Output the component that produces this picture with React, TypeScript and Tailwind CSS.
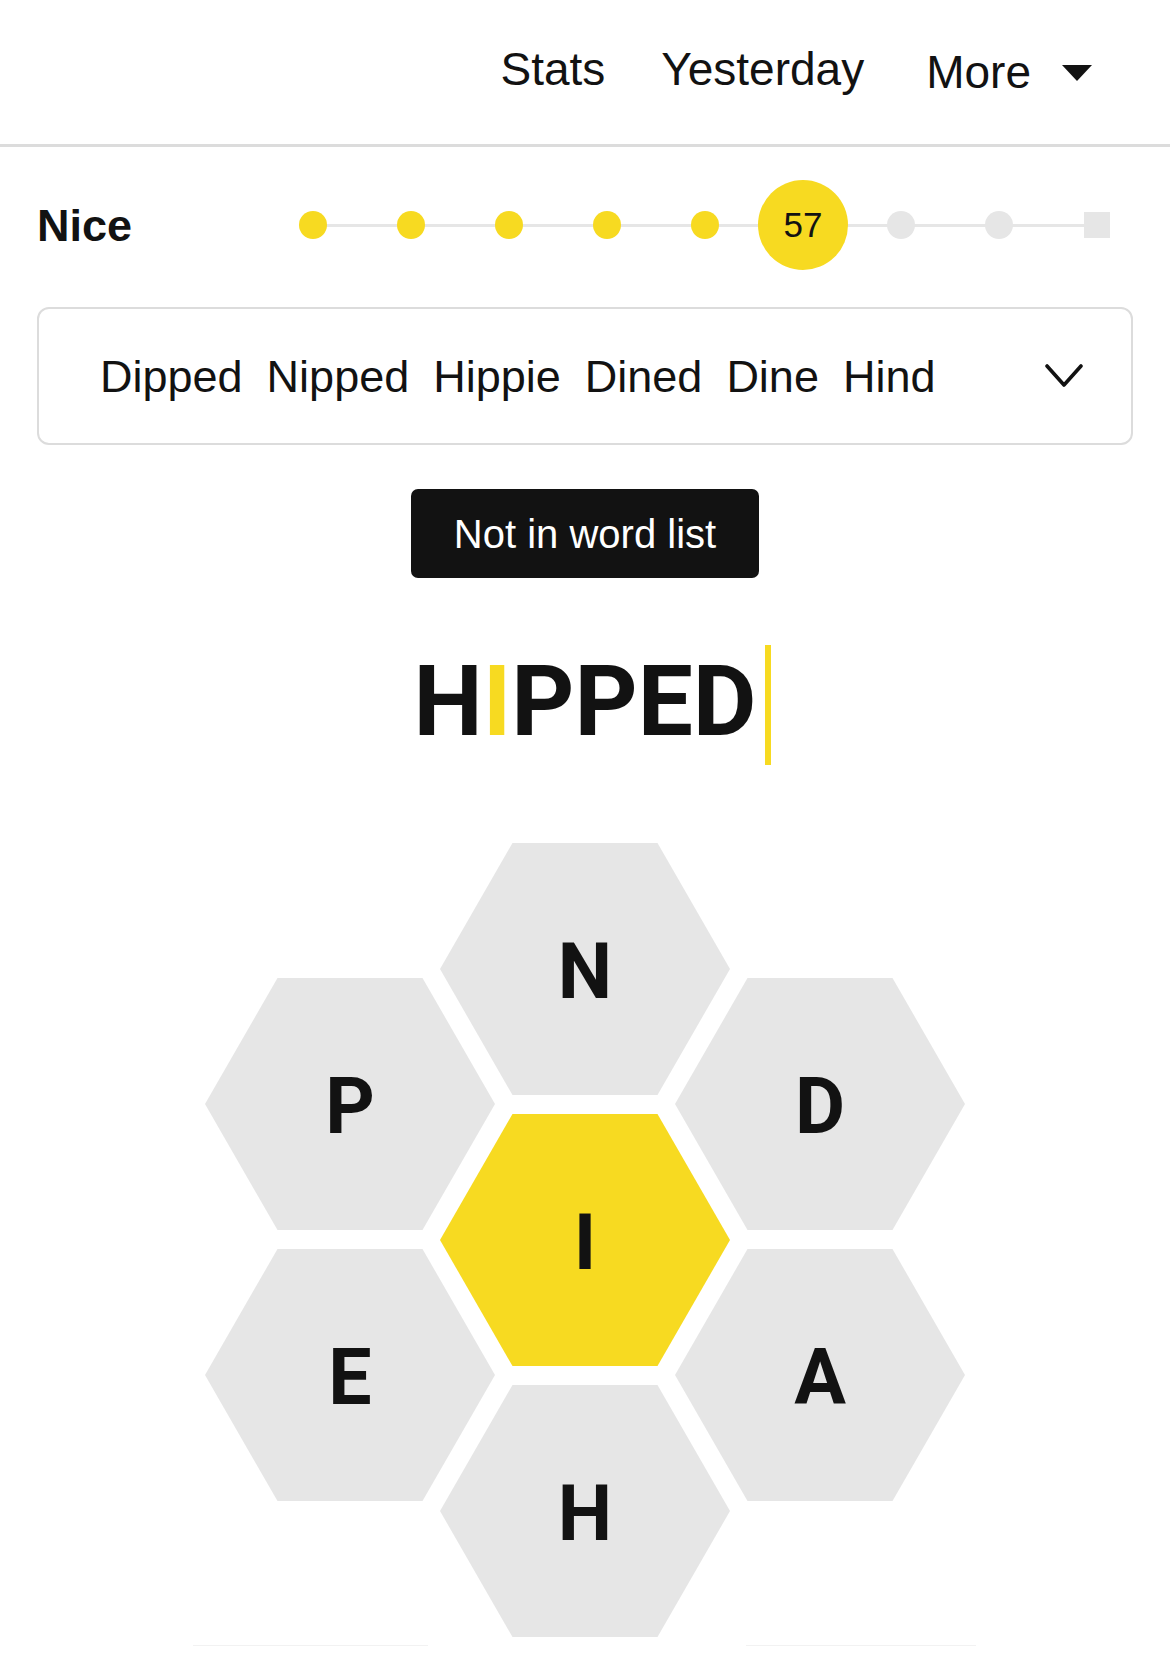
const hexClip = '[clip-path:polygon(25%_0,75%_0,100%_50%,75%_100%,25%_100%,0_50%)]';

// position of each cell inside the hive, in px from its top-left corner
const celdas = [
  { letra: 'N', pos: 'left-[235px] top-0', centro: false },
  { letra: 'P', pos: 'left-0 top-[135px]', centro: false },
  { letra: 'D', pos: 'left-[470px] top-[135px]', centro: false },
  { letra: 'I', pos: 'left-[235px] top-[271px]', centro: true },
  { letra: 'E', pos: 'left-0 top-[406px]', centro: false },
  { letra: 'A', pos: 'left-[470px] top-[406px]', centro: false },
  { letra: 'H', pos: 'left-[235px] top-[542px]', centro: false },
];

const palabras = ['Dipped', 'Nipped', 'Hippie', 'Dined', 'Dine', 'Hind'];

function Progreso() {
  const pasos = [1, 1, 1, 1, 1, 2, 0, 0, 3];
  return (
    <div className="relative ml-auto mr-[24px] grid grid-cols-[repeat(9,98px)] items-center h-[90px]">
      <div className="absolute left-[49px] right-[49px] top-[44px] h-[3px] bg-[#e6e6e6]" />
      {pasos.map((p, i) => (
        <div key={i} className="relative flex justify-center items-center">
          {p === 1 && <div className="w-[28px] h-[28px] rounded-full bg-[#f7da21]" />}
          {p === 0 && <div className="w-[28px] h-[28px] rounded-full bg-[#e6e6e6]" />}
          {p === 3 && <div className="w-[26px] h-[26px] bg-[#e6e6e6]" />}
          {p === 2 && (
            <div className="w-[90px] h-[90px] rounded-full bg-[#f7da21] flex items-center justify-center text-[35px] text-[#121212]">
              57
            </div>
          )}
        </div>
      ))}
    </div>
  );
}

export default function App() {
  return (
    <div className="w-[1170px] min-h-[1679px] bg-white text-[#121212] font-['Liberation_Sans',Arial,sans-serif] overflow-hidden">
      {/* Barra superior */}
      <div className="h-[147px] border-b-[3px] border-[#dcdcdc] flex items-center justify-end pr-[78px] pb-[6px] text-[46px] leading-none">
        <span>Stats</span>
        <span className="ml-[56px]">Yesterday</span>
        <span className="ml-[62px] mt-[6px]">More</span>
        <svg className="ml-[31px] mt-[8px]" width="30" height="16" viewBox="0 0 30 16">
          <polygon points="0,0 30,0 15,16" fill="#121212" />
        </svg>
      </div>

      {/* Rango y progreso */}
      <div className="mt-[33px] flex items-center pl-[37px]">
        <span className="text-[45px] font-bold leading-none">Nice</span>
        <Progreso />
      </div>

      {/* Palabras encontradas */}
      <div className="mt-[37px] mx-[37px] h-[138px] border-2 border-[#dcdcdc] rounded-[12px] flex items-center pl-[61px] pr-[48px]">
        <div className="flex gap-[24px] text-[45px] leading-none">
          {palabras.map(p => (
            <span key={p}>{p}</span>
          ))}
        </div>
        <svg className="ml-auto" width="38" height="26" viewBox="0 0 38 26">
          <polyline points="2,3 19,22 36,3" fill="none" stroke="#121212" strokeWidth="3.6" strokeLinecap="round" strokeLinejoin="round" />
        </svg>
      </div>

      {/* Mensaje */}
      <div className="mt-[44px] flex justify-center">
        <div className="h-[89px] w-[348px] rounded-[7px] bg-[#121212] text-white text-[40px] flex items-center justify-center">
          Not in word list
        </div>
      </div>

      {/* Palabra en curso */}
      <div className="mt-[67px] h-[120px] flex justify-center items-center pl-[14px]">
        <span className="font-['Roboto',sans-serif] font-bold text-[98px] leading-none mb-[6px]">
          H<span className="text-[#f7da21]">I</span>PPED
        </span>
        <div className="ml-[8px] w-[6px] h-[120px] bg-[#f7da21]" />
      </div>

      {/* Colmena */}
      <div className="relative mx-auto mt-[78px] w-[760px] h-[794px]">
        {celdas.map(c => (
          <div
            key={c.letra}
            className={`absolute ${c.pos} w-[290px] h-[252px] ${hexClip} flex items-center justify-center ${
              c.centro ? 'bg-[#f7da21]' : 'bg-[#e6e6e6]'
            }`}
          >
            <span className="font-['Roboto',sans-serif] font-bold text-[77px] leading-none mt-[6px]">{c.letra}</span>
          </div>
        ))}
      </div>

      <div className="mt-[8px] flex">
        <div className="ml-[193px] w-[235px] h-px bg-[#f2f2f2]" />
        <div className="ml-[318px] w-[230px] h-px bg-[#f2f2f2]" />
      </div>
    </div>
  );
}
